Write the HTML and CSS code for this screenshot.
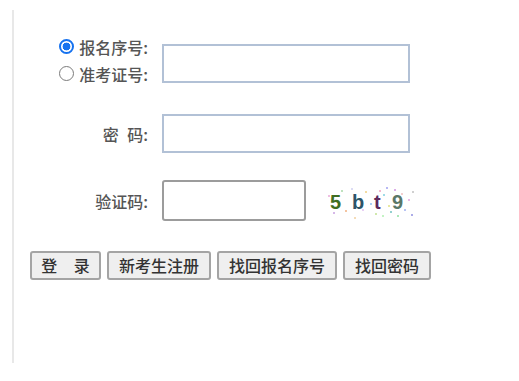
FILE: index.html
```html
<!DOCTYPE html>
<html lang="zh-CN">
<head>
<meta charset="utf-8">
<title>登录</title>
<link rel="stylesheet" href="styles.css">
</head>
<body>
<div class="panel">
  <form class="login">
    <div class="row row-id">
      <div class="label radios">
        <label class="radio-line"><input class="radio" type="radio" name="idtype" checked><span>报名序号:</span></label>
        <label class="radio-line"><input class="radio" type="radio" name="idtype"><span>准考证号:</span></label>
      </div>
      <input class="field field-blue field-id" type="text">
    </div>
    <div class="row">
      <div class="label spaced">密 码:</div>
      <input class="field field-blue" type="password">
    </div>
    <div class="row row-code">
      <div class="label">验证码:</div>
      <input class="field field-code" type="text">
      <svg class="captcha" width="92" height="34" viewBox="0 0 92 34">
        <g class="noise">
          <circle cx="4" cy="10" r="1" fill="#e9a8d8"/>
          <circle cx="9" cy="27" r="1" fill="#c9a0e0"/>
          <circle cx="17" cy="5" r="1" fill="#a8d8a8"/>
          <circle cx="21" cy="25" r="1" fill="#f0b080"/>
          <circle cx="27" cy="3" r="1" fill="#d0d0f0"/>
          <circle cx="33" cy="13" r="1" fill="#b0e0b0"/>
          <circle cx="38" cy="24" r="1" fill="#e0c0f0"/>
          <circle cx="41" cy="6" r="1" fill="#f0d080"/>
          <circle cx="46" cy="18" r="1" fill="#90c0f0"/>
          <circle cx="51" cy="28" r="1" fill="#c0e090"/>
          <circle cx="55" cy="5" r="1" fill="#f0a0c0"/>
          <circle cx="59" cy="9" r="1" fill="#80d0e0"/>
          <circle cx="62" cy="2" r="1" fill="#a0a0f0"/>
          <circle cx="64" cy="20" r="1" fill="#e0e080"/>
          <circle cx="66" cy="26" r="1" fill="#70c0c0"/>
          <circle cx="70" cy="4" r="1" fill="#d090e0"/>
          <circle cx="73" cy="30" r="1" fill="#90e0a0"/>
          <circle cx="77" cy="8" r="1" fill="#f0c0c0"/>
          <circle cx="80" cy="24" r="1" fill="#a0b0f0"/>
          <circle cx="84" cy="14" r="1" fill="#e0a0e0"/>
          <circle cx="88" cy="6" r="1" fill="#c0c0c0"/>
          <circle cx="87" cy="29" r="1" fill="#9090e0"/>
          <circle cx="30" cy="32" r="1" fill="#f0d0a0"/>
          <circle cx="58" cy="30" r="1" fill="#b0f0b0"/>
        </g>
        <text x="5" y="23" class="ch" fill="#3f6e22">5</text>
        <text x="27" y="23" class="ch" fill="#2d5468">b</text>
        <text x="49" y="23" class="ch" fill="#5c2a5c">t</text>
        <text x="67" y="23" class="ch" fill="#5a7868">9</text>
      </svg>
    </div>
    <div class="actions">
      <button type="button" class="btn btn-login">登 录</button>
      <button type="button" class="btn">新考生注册</button>
      <button type="button" class="btn">找回报名序号</button>
      <button type="button" class="btn">找回密码</button>
    </div>
  </form>
</div>
</body>
</html>
```
FILE: styles.css
```css
html, body {
  margin: 0;
  padding: 0;
  background: #ffffff;
}

body {
  font-family: "Noto Sans CJK SC", "Noto Sans", sans-serif;
  font-size: 16px;
  font-weight: 500;
  color: #555555;
}

.panel {
  margin: 10px 0 0 12px;
  height: 353px;
  border-left: 2px solid #e8e8e8;
  box-sizing: border-box;
}

.login {
  padding-top: 23px;
  margin: 0;
}

.row {
  display: flex;
  align-items: center;
  gap: 14px;
  margin-bottom: 27px;
}

.row-id {
  align-items: flex-start;
}

.row-code {
  margin-bottom: 30px;
}

.label {
  width: 134px;
  text-align: right;
  line-height: 20px;
  white-space: pre;
}

.spaced {
  word-spacing: 5px;
}

.radios {
  display: flex;
  flex-direction: column;
  align-items: flex-end;
}

.radio-line {
  display: flex;
  align-items: center;
  gap: 5px;
  height: 27px;
}

.radio {
  appearance: none;
  -webkit-appearance: none;
  flex: none;
  box-sizing: border-box;
  margin: 0;
  width: 15px;
  height: 15px;
  border-radius: 50%;
  border: 1.5px solid #7b7b7b;
  background: #ffffff;
}

.radio:checked {
  border: 2px solid #1672ef;
  background: radial-gradient(circle, #1672ef 0 3.6px, #ffffff 4.2px);
}

.field {
  box-sizing: border-box;
  margin: 0;
  padding: 0 4px;
  background: #ffffff;
  outline: none;
  font: inherit;
}

.field-blue {
  width: 248px;
  height: 39px;
  border: 2px solid #b2c1d6;
}

.field-id {
  margin-top: 11px;
}

.field-code {
  width: 144px;
  height: 41px;
  border: 2px solid #9c9c9c;
  border-radius: 3px;
}

.captcha {
  display: block;
  margin-left: 5px;
  margin-top: 4px;
}

.captcha .ch {
  font-family: "Liberation Sans", "DejaVu Sans", sans-serif;
  font-size: 20px;
  font-weight: bold;
}

.actions {
  display: flex;
  gap: 6px;
  padding-left: 16px;
}

.btn {
  box-sizing: border-box;
  height: 29px;
  margin: 0;
  padding: 0 10px;
  font-family: "Noto Sans CJK SC", sans-serif;
  font-size: 16px;
  font-weight: 500;
  line-height: 25px;
  color: #333333;
  background: #efefef;
  border: 2px solid #a4a4a4;
  border-radius: 3px;
  white-space: pre;
}

.btn-login {
  width: 71px;
  padding: 0;
  word-spacing: 13px;
  text-align: center;
}
```
